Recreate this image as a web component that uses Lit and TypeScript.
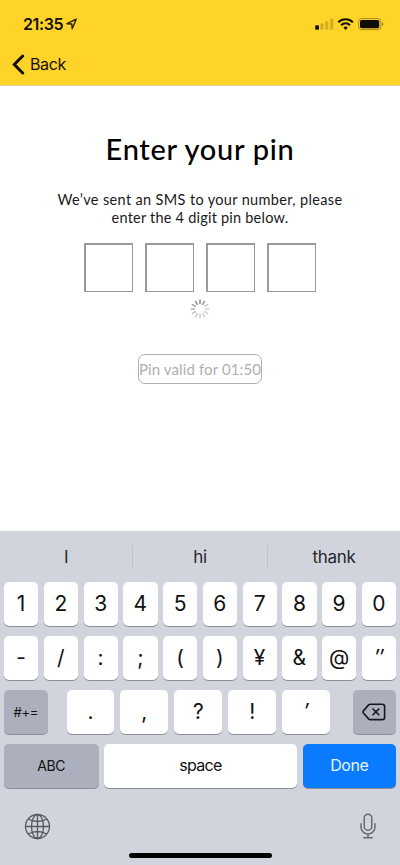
import { LitElement, html, css, svg } from "lit";
import { customElement } from "lit/decorators.js";

@customElement("status-header")
class StatusHeader extends LitElement {
  static styles = css`
    :host { display: block; box-sizing: border-box; height: 86px; background: #ffd428; border-bottom: 1px solid #e6d592; color: #150f08; font-family: Inter, "Liberation Sans", sans-serif; }
    .status { display: flex; align-items: center; height: 47px; padding: 0 16px 0 23px; }
    .time { font-size: 16px; font-weight: 600; line-height: 20px; letter-spacing: -0.4px; width: 41px; white-space: nowrap; margin-top: 1px; }
    .arrow { margin-left: 2px; }
    .right { margin-left: auto; }
    svg { display: block; }
    .nav { display: flex; align-items: center; height: 34px; padding-left: 12px; }
    .back { font-size: 16px; line-height: 20px; margin-left: 5px; letter-spacing: -0.4px; }
  `;
  render() {
    return html`
      <div class="status">
        <span class="time">21:35</span>
        <svg class="arrow" width="12" height="12" viewBox="0 0 12 12"><path d="M1 5.7 L10.2 1.2 L6.2 10.8 L5.8 6 Z" fill="none" stroke="#2b210b" stroke-width="1.4" stroke-linejoin="round"/></svg>
        <svg class="right" width="70" height="14" viewBox="0 0 70 14">
          <rect x="1.2" y="8.2" width="3.8" height="4.5" rx="1" fill="#150f08"/>
          <g fill="#d4ac20"><rect x="6.3" y="6.2" width="3.2" height="6.5" rx=".8"/><rect x="11.2" y="4.2" width="3.2" height="8.5" rx=".8"/><rect x="16.1" y="1.8" width="3.2" height="10.9" rx=".8"/></g>
          <g fill="none" stroke="#150f08" stroke-width="2"><path d="M24.3 5.2a10.3 10.3 0 0 1 14.6 0"/><path d="M27.1 8.2a6.4 6.4 0 0 1 9 0"/></g>
          <path d="M29.4 10.6a3.2 3.2 0 0 1 4.4 0L31.6 12.9z" fill="#150f08"/>
          <rect x="44.6" y="1.6" width="22.2" height="11" rx="3" fill="none" stroke="#a98a1e"/>
          <rect x="46" y="3" width="19.2" height="8.2" rx="1.6" fill="#100c06"/>
          <path d="M68 5.2c2 .7 2 3.2 0 3.9z" fill="#a98a1e"/>
        </svg>
      </div>
      <div class="nav">
        <svg width="13" height="21" viewBox="0 0 13 21"><path d="M10.7 2 L2.3 10.5 L10.7 19" fill="none" stroke="#150f08" stroke-width="3" stroke-linecap="round"/></svg>
        <span class="back">Back</span>
      </div>`;
  }
}

@customElement("pin-form")
class PinForm extends LitElement {
  static styles = css`
    :host { display: flex; flex-direction: column; align-items: center; height: 445px; background: #fff; font-family: Lato, "Open Sans", sans-serif; color: #0b0b0b; white-space: nowrap; }
    h1 { margin: 45px 0 0; font-size: 29px; line-height: 36px; font-weight: 500; color: #000; letter-spacing: 0.7px; }
    p { margin: 24px 0 0; font-size: 14.5px; line-height: 18px; text-align: center; color: #1a1a1a; letter-spacing: 0.35px; }
    .second { letter-spacing: 0.22px; }
    .boxes { display: flex; gap: 12px; margin-top: 16px; }
    .box { box-sizing: border-box; width: 49px; height: 49px; border: 1px solid #999; border-top: 2px solid #9a9a9a; border-left: 2px solid #9a9a9a; }
    .spinner { display: block; margin-top: 7px; }
    .valid { box-sizing: border-box; width: 124px; height: 30px; margin-top: 35px; border: 1px solid #b0b0b0; border-radius: 7px; font-size: 15px; line-height: 29px; color: #b0b0b0; letter-spacing: 0.12px; display: flex; justify-content: center; }
  `;
  render() {
    const shades = ["#888", "#999", "#ccc", "#d4d4d4", "#d2d2d2", "#d0d0d0", "#cecece", "#c8c8c8", "#c2c2c2", "#b5b5b5", "#a6a6a6", "#929292"];
    return html`
      <h1>Enter your pin</h1>
      <p>We’ve sent an SMS to your number, please<br /><span class="second">enter the 4 digit pin below.</span></p>
      <div class="boxes">${[0, 1, 2, 3].map(() => html`<div class="box"></div>`)}</div>
      <svg class="spinner" width="20" height="20" viewBox="-10 -10 20 20">
        ${shades.map((c, i) => svg`<path d="M0 -5.4V-8.8" stroke=${c} stroke-width="1.6" stroke-linecap="round" transform="rotate(${i * 30})"/>`)}
      </svg>
      <div class="valid">Pin valid for 01:50</div>`;
  }
}

@customElement("key-board")
class KeyBoard extends LitElement {
  static styles = css`
    :host { display: block; box-sizing: border-box; height: 334px; background: #d1d4dc; color: #111; font-family: Inter, "Liberation Sans", sans-serif; }
    .suggest { display: grid; grid-template-columns: 132px 1px 134px 1px 132px; align-items: center; height: 51px; }
    .word { text-align: center; font-size: 17px; letter-spacing: -0.35px; line-height: 22px; color: #25272b; margin-top: 1px; }
    .rule { height: 24px; background: #bfc2ca; }
    .rows { display: grid; grid-auto-rows: 43.5px; row-gap: 10.5px; padding: 0 4px; }
    .row { display: flex; gap: 5.5px; }
    .key { box-sizing: border-box; flex: 1; display: flex; align-items: center; justify-content: center; background: #fff; border-radius: 5px; box-shadow: 0 1px 0 #8c8f96; font-size: 21px; line-height: 24px; white-space: nowrap; }
    .slant { font-style: italic; }
    .dark { background: #abb0bc; }
    .side { flex: 0 0 43.5px; font-size: 13px; letter-spacing: -0.3px; }
    .middle { flex: 1; display: flex; gap: 6px; padding: 0 17px 0 13.5px; }
    .abc { flex: 0 0 94.5px; font-size: 14px; letter-spacing: -0.4px; padding-top: 1px; }
    .space { font-size: 16px; letter-spacing: -0.7px; padding-bottom: 2px; }
    .done { flex: 0 0 93.5px; font-size: 16px; letter-spacing: -0.5px; padding-bottom: 2px; background: #0a7aff; color: #e8f4ff; }
    .tools { display: flex; align-items: center; justify-content: space-between; height: 64px; padding: 8px 23px 0 24px; box-sizing: border-box; margin-top: 2.5px; margin-bottom: -1px; }
    .home { width: 143px; height: 5px; border-radius: 3px; background: #000; margin: 0 auto; }
    svg { display: block; }
  `;
  key(t: string) {
    return html`<div class="key ${t === "″" || t === "′" ? "slant" : ""}">${t}</div>`;
  }
  render() {
    return html`
      <div class="suggest"><span class="word">I</span><i class="rule"></i><span class="word">hi</span><i class="rule"></i><span class="word">thank</span></div>
      <div class="rows">
        <div class="row">${[..."1234567890"].map((t) => this.key(t))}</div>
        <div class="row">${[..."-/:;()¥&@″"].map((t) => this.key(t))}</div>
        <div class="row">
          <div class="key dark side">#+=</div>
          <div class="middle">${[...".,?!′"].map((t) => this.key(t))}</div>
          <div class="key dark side">
            <svg width="24" height="18" viewBox="0 0 24 18" fill="none" stroke="#16181d" stroke-width="1.6" stroke-linejoin="round" stroke-linecap="round"><path d="M8.2 1.2H20.2Q22.6 1.2 22.6 3.6V14.2Q22.6 16.6 20.2 16.6H8.2Q7.3 16.6 6.6 15.9L1.6 10.2Q.6 8.9 1.6 7.6L6.6 1.9Q7.3 1.2 8.2 1.2Z"/><path d="M11 6l5.8 5.8M16.8 6L11 11.8"/></svg>
          </div>
        </div>
        <div class="row">
          <div class="key dark abc">ABC</div>
          <div class="key space">space</div>
          <div class="key done">Done</div>
        </div>
      </div>
      <div class="tools">
        <svg width="27" height="27" viewBox="0 0 27 27" fill="none" stroke="#555960" stroke-width="1.3"><circle cx="13.5" cy="13.5" r="12"/><ellipse cx="13.5" cy="13.5" rx="6" ry="12"/><path d="M13.5 1.5v24M1.5 13.5h24M4.2 6Q13.5 11 22.8 6M4.2 21Q13.5 16 22.8 21"/></svg>
        <svg width="18" height="26" viewBox="0 0 18 26" fill="none" stroke="#62666e" stroke-width="1.4" stroke-linecap="round"><rect x="5.2" y="1.2" width="7.6" height="16" rx="3.8"/><path d="M2 10.8v3.3a7 6.8 0 0 0 14 0v-3.3M9 21v3.7M4.8 24.7h8.4"/></svg>
      </div>
      <div class="home"></div>`;
  }
}

@customElement("app-root")
class AppRoot extends LitElement {
  static styles = css`
    :host { display: block; height: 865px; overflow: hidden; background: #fff; }
  `;
  render() {
    return html`<status-header></status-header><pin-form></pin-form><key-board></key-board>`;
  }
}
